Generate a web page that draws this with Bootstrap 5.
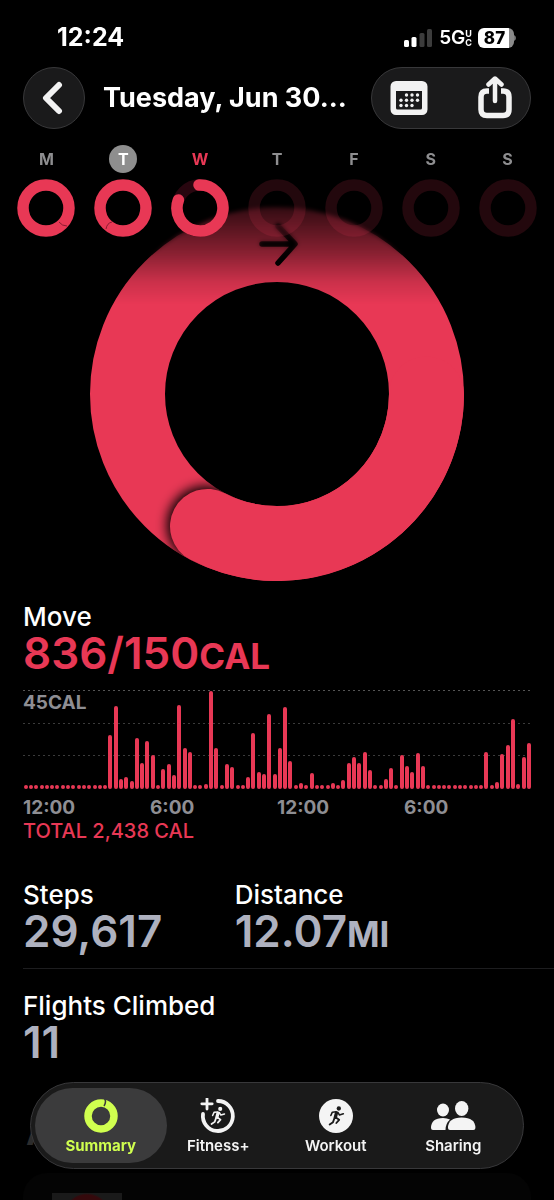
<!DOCTYPE html>
<html lang="en" data-bs-theme="dark">
<head>
<meta charset="utf-8">
<meta name="viewport" content="width=device-width, initial-scale=1">
<title>Activity Summary</title>
<link href="https://cdn.jsdelivr.net/npm/bootstrap@5.3.0/dist/css/bootstrap.min.css" rel="stylesheet">
<style>
  :root { --move: #e83855; --glass: #1a1a1b; --edge: #38383a; --muted: #8e8e93; --metric: #aeb1bf; }
  body { background: #000; color: #fff; font-family: Inter, "Liberation Sans", sans-serif; overflow-x: hidden; }
  svg { display: block; }
  .top-area { z-index: 2; }
  .top-shade { position: absolute; left: 0; right: 0; top: 196px; height: 108px; z-index: -1; pointer-events: none;
    background: linear-gradient(rgba(0,0,0,.88), rgba(0,0,0,.7) 20%, rgba(0,0,0,.42) 52%, rgba(0,0,0,.12) 80%, rgba(0,0,0,0)); }
  .top-blur { position: absolute; left: 0; right: 0; top: 180px; height: 80px; z-index: -2; pointer-events: none;
    backdrop-filter: blur(2px); -webkit-mask-image: linear-gradient(#000 50%, transparent); mask-image: linear-gradient(#000 50%, transparent); }
  .status { height: 67px; padding: 8px 38px 0 57px; }
  .clock { font-size: 25px; font-weight: 700; }
  .signal { margin-right: 7px; }
  .carrier { font-size: 19px; font-weight: 600; line-height: 20px; }
  .carrier-sub { font-size: 9px; font-weight: 700; line-height: 9px; }
  .battery { width: 36px; height: 20px; margin-left: 6px; border-radius: 6px; font-size: 17px; font-weight: 800; color: #000;
    background: linear-gradient(90deg, #fff 31px, #8a8a8a 31px); line-height: 20px; padding-right: 3px; }
  .toolbar { padding: 0 23px; }
  .glass { background: var(--glass); border: 1px solid var(--edge); color: #f2f2f2; padding: 0; }
  .back-btn { width: 62px; height: 62px; padding-right: 5px; }
  .tools { width: 160px; height: 62px; padding: 0 14px; }
  .tool-btn { background: none; border: 0; padding: 0 4px; color: #f2f2f2; }
  .day-title { font-size: 27px; font-weight: 700; margin: 0 0 0 18px; line-height: 32px; white-space: nowrap; }
  .week { padding: 16px 8px 0; }
  .day { color: #8e8e90; text-decoration: none; font-size: 16px; font-weight: 700; }
  .day-letter { width: 28px; height: 28px; line-height: 28px; }
  .day.chosen .day-letter { background: #8e8e8e; color: #fff; }
  .day.today { color: var(--move); }
  .big-ring { width: 374px; margin-top: -30px; }
  .content { padding: 21px 23px 0; }
  .label { font-size: 26px; font-weight: 500; line-height: 30px; margin: 0; }
  .value { font-size: 44px; font-weight: 600; line-height: 42px; margin: 0; color: var(--metric); }
  .value .unit { font-size: 35px; font-weight: 700; line-height: 34px; }
  .value.move, .total { color: var(--move); }
  .chart { height: 99px; margin-top: 16px; }
  .rule { position: absolute; left: 0; right: 0; height: 1px; background: repeating-linear-gradient(90deg, #555 0 2px, transparent 2px 5px); }
  .rule.r1 { top: 0; } .rule.r2 { top: 33%; opacity: .7; } .rule.r3 { top: 66%; opacity: .7; }
  .chart-max { position: absolute; top: 2px; left: 0; }
  .axis-text { color: var(--muted); font-size: 19px; font-weight: 700; line-height: 22px; }
  .bars { height: 99px; }
  .bars i { width: 4px; border-radius: 2px; background: var(--move); }
  .axis { margin-top: 8px; }
  .total { font-size: 20px; font-weight: 500; line-height: 24px; margin: 0; }
  .stats { margin-top: 37px; }
  .divider { height: 1px; background: #1d1d1f; margin: 16px -23px 22px 0; }
  .awards { font-size: 35px; font-weight: 700; line-height: 42px; margin: 48px 0 0 3px; color: #2c2c2c; }
  .award-card { height: 27px; margin-top: 20px; padding: 20px 29px 0; border-radius: 24px 24px 0 0; background: #040404; overflow: hidden; }
  .award-art { width: 70px; height: 24px; background: radial-gradient(circle at 50% 100%, #35090c 0 22px, #1a1a1a 24px); }
  .tabs { position: fixed; left: 30px; right: 30px; bottom: 31px; height: 87px; z-index: 3; padding: 0 11px;
    background: rgba(27,27,27,.97); border: 1px solid var(--edge); border-radius: 44px; }
  .tab { color: #f4f4f4; text-decoration: none; font-size: 15px; font-weight: 600; line-height: 18px; padding-top: 15px; }
  .tab svg { height: 36px; margin-bottom: 3px; }
  .tab.active { color: #d0ff4f; font-weight: 700; }
  .tab.active::before { content: ""; position: absolute; inset: 5px -7px; border-radius: 38px; background: #3b3b3c; z-index: -1; }
</style>
</head>
<body>
<svg width="0" height="0" class="position-absolute" aria-hidden="true">
  <symbol id="runner" viewBox="0 0 20 24">
    <circle cx="12.8" cy="3" r="2.6" fill="currentColor"/>
    <g fill="none" stroke="currentColor" stroke-linecap="round" stroke-linejoin="round">
      <path d="M10 8.2 8.6 13.6" stroke-width="4"/>
      <path d="M9.5 7 5 7.4 3.2 11.4" stroke-width="1.9"/>
      <path d="M11.6 7.6 13.6 10.8 18.2 9.4" stroke-width="1.9"/>
      <path d="M9.6 14 13.2 16.6 9.8 20.4" stroke-width="2.2"/>
      <path d="M7.6 14.4 5.8 19.4 1.8 22.2" stroke-width="2.2"/>
    </g>
  </symbol>
  <symbol id="empty-day" viewBox="-29 -31 58 60"><circle r="23" fill="none" stroke="#e83855" stroke-opacity=".15" stroke-width="11.5"/></symbol>
</svg>

<header class="top-area position-relative">
  <div class="top-blur"></div>
  <div class="top-shade"></div>
  <div class="status d-flex align-items-center justify-content-between">
    <span class="clock">12:24</span>
    <div class="d-flex align-items-center">
      <svg width="28" height="18" viewBox="0 0 28 18" class="signal" aria-hidden="true">
        <g fill="#fff"><rect x="0" y="11" width="5" height="7" rx="1.5"/><rect x="7.5" y="8" width="5" height="10" rx="1.5"/></g>
        <g fill="#3c3c3c"><rect x="15.5" y="4" width="5" height="14" rx="1.5"/><rect x="23" y="0" width="5" height="18" rx="1.5"/></g>
      </svg>
      <span class="carrier">5G</span>
      <span class="carrier-sub d-flex flex-column"><span>U</span><span>C</span></span>
      <span class="battery text-center">87</span>
      <svg width="2" height="6" viewBox="0 0 2 6" aria-hidden="true"><path d="M0 0q2 1 2 3t-2 3z" fill="#777"/></svg>
    </div>
  </div>

  <div class="toolbar d-flex align-items-center">
    <button type="button" class="glass back-btn rounded-circle d-flex align-items-center justify-content-center flex-shrink-0" aria-label="Back">
      <svg width="24" height="34" viewBox="0 0 24 34"><path d="M19 4 6 17l13 13" fill="none" stroke="currentColor" stroke-width="6" stroke-linecap="round" stroke-linejoin="round"/></svg>
    </button>
    <h1 class="day-title">Tuesday, Jun 30...</h1>
    <div class="glass tools rounded-pill d-flex align-items-center justify-content-between ms-auto flex-shrink-0">
      <button type="button" class="tool-btn" aria-label="Calendar">
        <svg width="38" height="44" viewBox="0 0 38 44">
          <path fill="currentColor" fill-rule="evenodd" d="M6 5h26a5.5 5.5 0 0 1 5.5 5.5v23a5.5 5.5 0 0 1-5.5 5.5H6a5.5 5.5 0 0 1-5.5-5.5v-23A5.5 5.5 0 0 1 6 5zM6 15v17q0 1.5 1.5 1.5h23q1.5 0 1.5-1.5V15z"/>
          <g fill="currentColor"><circle cx="16.5" cy="19" r="1.7"/><circle cx="22" cy="19" r="1.7"/><circle cx="27.5" cy="19" r="1.7"/><circle cx="11" cy="24.2" r="1.7"/><circle cx="16.5" cy="24.2" r="1.7"/><circle cx="22" cy="24.2" r="1.7"/><circle cx="27.5" cy="24.2" r="1.7"/><circle cx="11" cy="29.5" r="1.7"/><circle cx="16.5" cy="29.5" r="1.7"/><circle cx="22" cy="29.5" r="1.7"/></g>
        </svg>
      </button>
      <button type="button" class="tool-btn" aria-label="Share">
        <svg width="34" height="44" viewBox="0 0 34 44" fill="none" stroke="currentColor" stroke-linecap="round" stroke-linejoin="round">
          <path d="M11 15H9Q3 15 3 21V33.5Q3 39.5 9 39.5H25Q31 39.5 31 33.5V21Q31 15 25 15H23" stroke-width="5.5" stroke-linecap="butt"/>
          <path d="M17 25V3M10.5 8.5 17 2.5 23.5 8.5" stroke-width="4.5"/>
        </svg>
      </button>
    </div>
  </div>

  <nav class="week d-flex text-center" aria-label="Week">
    <a href="#" class="day col"><div class="day-letter rounded-circle mx-auto">M</div>
      <svg class="mx-auto mt-1" width="58" height="60" viewBox="-29 -31 58 60"><circle r="23" fill="none" stroke="#e83855" stroke-width="11.5"/><path d="M13 14q3 4 8 4" fill="none" stroke="#8a1c30" stroke-width="1"/></svg></a>
    <a href="#" class="day chosen col"><div class="day-letter rounded-circle mx-auto">T</div>
      <svg class="mx-auto mt-1" width="58" height="60" viewBox="-29 -31 58 60"><circle r="23" fill="none" stroke="#e83855" stroke-width="11.5"/><path d="M-11 14q-5 1-6 7" fill="none" stroke="#8a1c30" stroke-width="1"/></svg></a>
    <a href="#" class="day today col"><div class="day-letter rounded-circle mx-auto">W</div>
      <svg class="mx-auto mt-1" width="58" height="60" viewBox="-29 -31 58 60" fill="none" stroke-width="11.5"><circle r="23" stroke="#28060f"/><path d="M-1-23A23 23 0 1 1-21.6-8" stroke="#e83855" stroke-linecap="round"/></svg></a>
    <a href="#" class="day col"><div class="day-letter rounded-circle mx-auto">T</div>
      <svg class="mx-auto mt-1" width="58" height="60"><use href="#empty-day"/></svg></a>
    <a href="#" class="day col"><div class="day-letter rounded-circle mx-auto">F</div>
      <svg class="mx-auto mt-1" width="58" height="60"><use href="#empty-day"/></svg></a>
    <a href="#" class="day col"><div class="day-letter rounded-circle mx-auto">S</div>
      <svg class="mx-auto mt-1" width="58" height="60"><use href="#empty-day"/></svg></a>
    <a href="#" class="day col"><div class="day-letter rounded-circle mx-auto">S</div>
      <svg class="mx-auto mt-1" width="58" height="60"><use href="#empty-day"/></svg></a>
  </nav>
</header>

<main>
  <svg class="big-ring mx-auto" viewBox="-187 -187 374 374" role="img" aria-label="Move ring">
    <defs>
      <clipPath id="band"><path clip-rule="evenodd" d="M-187 0a187 187 0 1 0 374 0a187 187 0 1 0-374 0zM-112 0a112 112 0 1 0 224 0a112 112 0 1 0-224 0z"/></clipPath>
      <filter id="soft" x="-50%" y="-50%" width="200%" height="200%"><feGaussianBlur stdDeviation="6"/></filter>
    </defs>
    <circle r="149.5" fill="none" stroke="#e83855" stroke-width="75"/>
    <g clip-path="url(#band)"><circle cx="-71" cy="131" r="39" fill="#000" filter="url(#soft)"/></g>
    <path d="M149.5 0A149.5 149.5 0 0 1-69.5 132.4" fill="none" stroke="#e83855" stroke-width="75" stroke-linecap="round"/>
    <path d="M-15-150H17M1-168 18-150 1-131" fill="none" stroke="#000" stroke-width="5.5" stroke-linecap="round" stroke-linejoin="round"/>
  </svg>

  <div class="content">
    <section>
      <h2 class="label">Move</h2>
      <p class="value move">836/150<span class="unit">CAL</span></p>
      <div class="chart position-relative">
        <div class="rule r1"></div><div class="rule r2"></div><div class="rule r3"></div>
        <span class="chart-max axis-text">45CAL</span>
        <div class="bars d-flex align-items-end position-relative" id="bars"></div>
      </div>
      <div class="axis axis-text row g-0"><span class="col-3">12:00</span><span class="col-3">6:00</span><span class="col-3">12:00</span><span class="col-3">6:00</span></div>
      <p class="total">TOTAL 2,438 CAL</p>
    </section>

    <section class="stats row g-0">
      <div class="col-5"><h2 class="label">Steps</h2><p class="value">29,617</p></div>
      <div class="col-7"><h2 class="label">Distance</h2><p class="value">12.07<span class="unit">MI</span></p></div>
    </section>
    <div class="divider"></div>
    <section><h2 class="label">Flights Climbed</h2><p class="value">11</p></section>

    <h2 class="awards">Awards</h2>
    <div class="award-card"><div class="award-art"></div></div>
  </div>
</main>

<nav class="tabs d-flex text-center" aria-label="Main">
  <a href="#" class="tab active flex-fill w-25 position-relative z-0" aria-current="page">
    <svg class="mx-auto" width="36" viewBox="-18 -18 36 36" fill="none"><circle r="13" stroke="currentColor" stroke-width="7.5"/><path d="M3-18q3 3 0 8" stroke="#3b3b3c" stroke-width="1.5"/></svg>
    Summary</a>
  <a href="#" class="tab flex-fill w-25">
    <svg class="mx-auto" width="38" viewBox="-19 -18 38 36" fill="none" stroke="currentColor" stroke-linecap="round"><path d="M0-15A15 15 0 1 1-15-2" stroke-width="3.8"/><path d="M-11-17.5V-7M-16.2-12.2H-5.8" stroke-width="2.8"/><use href="#runner" x="-8" y="-9.5" width="16" height="19" stroke="none"/></svg>
    Fitness+</a>
  <a href="#" class="tab flex-fill w-25">
    <svg class="mx-auto" width="36" viewBox="-18 -18 36 36"><circle r="17" fill="currentColor"/><g color="#1b1b1b"><use href="#runner" x="-8" y="-10" width="17" height="20"/></g></svg>
    Workout</a>
  <a href="#" class="tab flex-fill w-25">
    <svg class="mx-auto" width="46" viewBox="0 0 46 36" fill="currentColor"><ellipse cx="13" cy="12" rx="6" ry="6.5"/><path d="M1 30q0-10 12-10 4 0 7 1.5-4.5 4-4.5 10.5H3q-2 0-2-2z"/><ellipse cx="31.7" cy="10.5" rx="6.7" ry="7.5"/><path d="M18 30q0-10.5 13.7-10.5T45.4 30q0 2-2 2H20q-2 0-2-2z"/></svg>
    Sharing</a>
</nav>

<script src="https://cdn.jsdelivr.net/npm/bootstrap@5.3.0/dist/js/bootstrap.bundle.min.js"></script>
<script>
  // Calories per quarter hour, scaled so that 98 is the 45 CAL line.
  const samples = [4,4,4,4,4,4,4,4,4,4,4,4,4,4,4,4,54,83,10,12,8,51,26,48,34,4,20,25,14,84,41,37,4,4,5,98,41,4,25,22,4,4,12,56,17,15,75,15,
    41,82,28,4,6,4,16,4,4,4,6,4,9,26,32,26,37,19,4,4,10,21,4,34,23,17,36,23,4,4,4,4,4,4,4,4,4,4,4,37,4,7,35,44,70,5,32,46];
  document.getElementById('bars').innerHTML = samples
    .map(v => `<div class="col d-flex align-items-end justify-content-center"><i style="height:${v}px"></i></div>`).join('');
</script>
</body>
</html>
